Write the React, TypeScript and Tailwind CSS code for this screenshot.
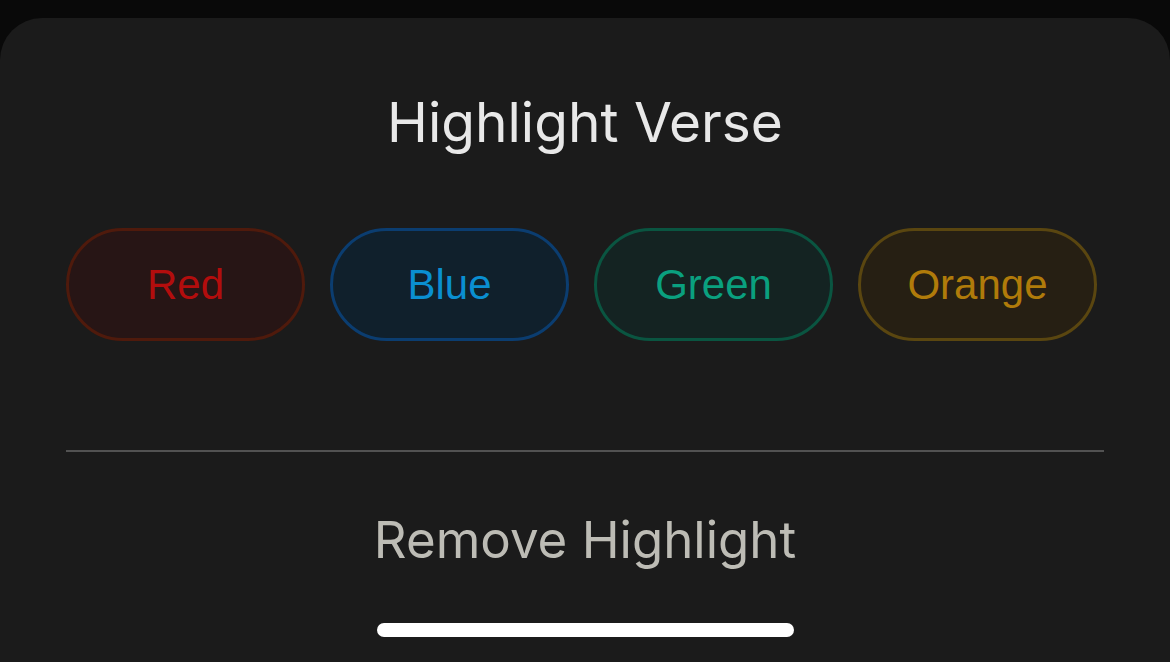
import React from 'react';

const colors = [
  { label: 'Red', cls: 'bg-[#271515] border-[#4f1a0c] text-[#b30d0d]' },
  { label: 'Blue', cls: 'bg-[#10202c] border-[#0b3d70] text-[#0a8fd1]' },
  { label: 'Green', cls: 'bg-[#142322] border-[#0a5541] text-[#0aa07f]' },
  { label: 'Orange', cls: 'bg-[#261f13] border-[#5a4610] text-[#b07b0a]' },
];

export default function App() {
  return (
    <div className="h-[662px] w-[1170px] bg-[#090909] pt-[18px] overflow-hidden">
      <div className="h-full bg-[#1b1b1b] rounded-t-[42px] flex flex-col px-[66px]">
        <h1 className="mt-[68px] text-center text-[#e8e8e8] text-[55px] leading-[72px] font-['Inter',sans-serif]">
          Highlight Verse
        </h1>

        <div className="mt-[70px] flex gap-[25px]">
          {colors.map((c) => (
            <button
              key={c.label}
              className={`w-[239px] h-[113px] rounded-full border-[3px] text-[42px] font-['Liberation_Sans',sans-serif] ${c.cls}`}
            >
              {c.label}
            </button>
          ))}
        </div>

        <div className="mt-[109px] h-[2px] bg-[#525252]" />

        <div className="mt-[55px] text-center text-[#bdbcb5] text-[51px] leading-[66px] font-['Inter',sans-serif]">
          Remove Highlight
        </div>

        <div className="mt-[50px] mx-auto w-[417px] h-[14px] rounded-full bg-white" />
      </div>
    </div>
  );
}
